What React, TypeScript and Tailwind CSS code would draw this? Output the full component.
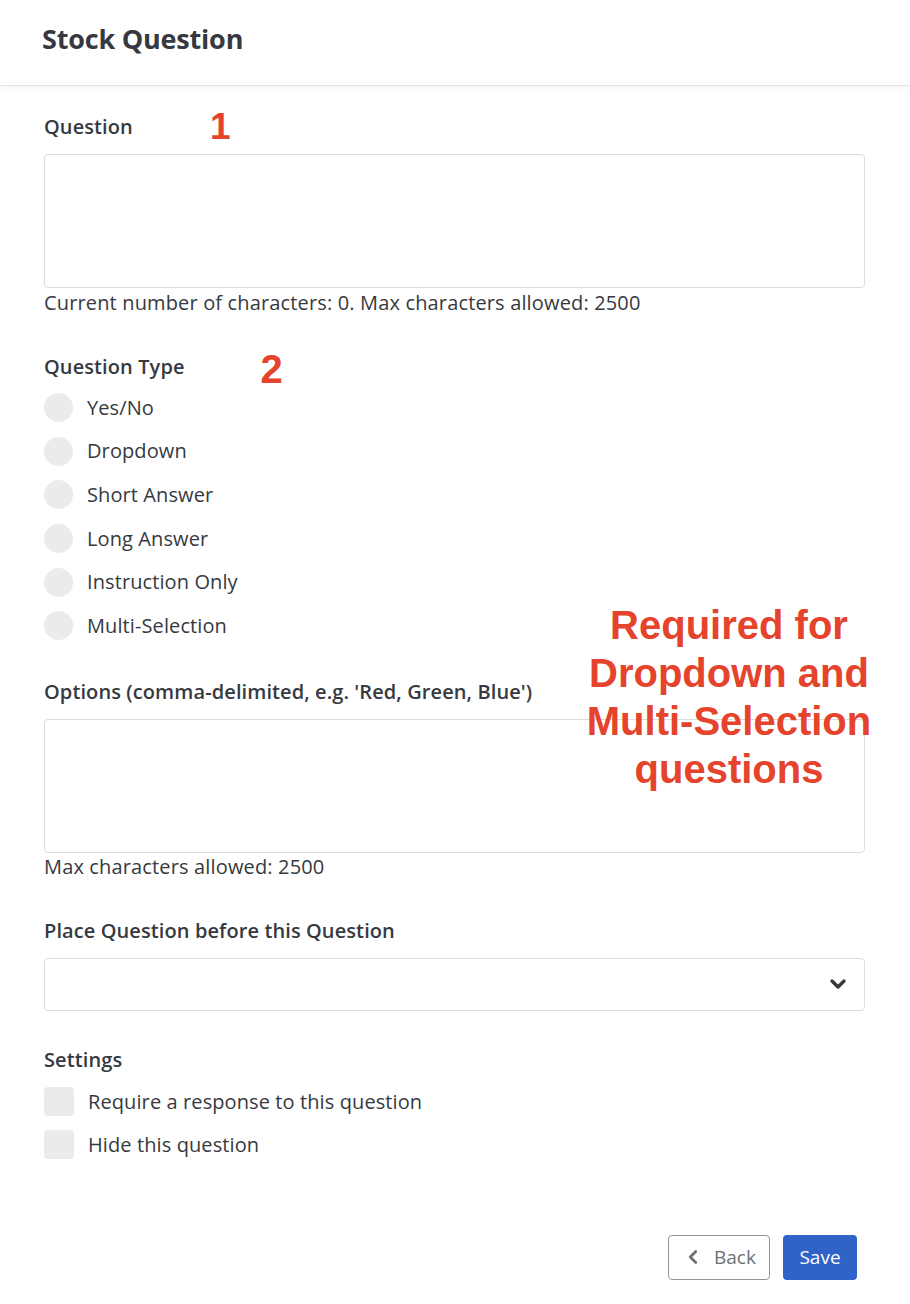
import React from "react";
import { ChevronDown, ChevronLeft } from "lucide-react";

const types = [
  "Yes/No",
  "Dropdown",
  "Short Answer",
  "Long Answer",
  "Instruction Only",
  "Multi-Selection",
];

const settings = ["Require a response to this question", "Hide this question"];

const App: React.FC = () => {
  return (
    <div className="relative min-h-[1304px] w-[910px] bg-white text-[#363a40] font-['Open_Sans',sans-serif]">
      <header className="h-[86px] border-b border-[#e4e4e7] shadow-[0_2px_4px_rgba(0,0,0,0.04)] pl-[42px] pt-[21px]">
        <h1 className="text-[27px] font-bold leading-[36px] tracking-[-0.2px]">Stock Question</h1>
      </header>

      <main className="px-[44px] pt-[26px]">
        {/* question */}
        <div className="flex items-end h-[30px]">
          <label className="text-[20px] font-semibold leading-[30px] tracking-[0.1px]">Question</label>
          <span className="ml-[77px] mb-[-3px] text-[37px] font-bold leading-[36px] text-[#e5432b] font-['Liberation_Sans',sans-serif]">1</span>
        </div>
        <textarea className="mt-[12px] block w-[821px] h-[134px] rounded-[4px] border border-[#dcdcdc] resize-none" />
        <p className="mt-[2px] text-[20px] leading-[26px] tracking-[0.15px]">
          Current number of characters: 0. Max characters allowed: 2500
        </p>

        {/* type */}
        <div className="mt-[36px] flex items-end h-[30px]">
          <label className="text-[20px] font-semibold leading-[30px] tracking-[0.1px]">Question Type</label>
          <span className="ml-[76px] mb-[-6px] text-[40px] font-bold leading-[38px] text-[#e5432b] font-['Liberation_Sans',sans-serif]">2</span>
        </div>
        <div className="mt-[4px] flex flex-col">
          {types.map((t) => (
            <div key={t} className="flex items-center h-[43.6px]">
              <span className="w-[29px] h-[29px] rounded-full bg-[#ebebed]" />
              <span className="ml-[14px] text-[20px] tracking-[0.1px]">{t}</span>
            </div>
          ))}
        </div>

        {/* options */}
        <label className="mt-[29px] block text-[20px] font-semibold leading-[30px] tracking-[0.1px]">
          Options (comma-delimited, e.g. 'Red, Green, Blue')
        </label>
        <textarea className="mt-[12px] block w-[821px] h-[134px] rounded-[4px] border border-[#dcdcdc] resize-none" />
        <p className="mt-[1px] text-[20px] leading-[26px] tracking-[0.15px]">Max characters allowed: 2500</p>

        {/* place before */}
        <label className="mt-[36px] block text-[20px] font-semibold leading-[30px] tracking-[0.1px]">
          Place Question before this Question
        </label>
        <div className="mt-[12px] flex items-center justify-end w-[821px] h-[53px] rounded-[4px] border border-[#dcdcdc] pr-[14px]">
          <ChevronDown size={24} strokeWidth={3.4} className="text-[#363a40]" />
        </div>

        {/* settings */}
        <label className="mt-[34px] block text-[20px] font-semibold leading-[30px] tracking-[0.1px]">Settings</label>
        <div className="mt-[12px] flex flex-col gap-[13px]">
          {settings.map((s) => (
            <div key={s} className="flex items-center">
              <span className="w-[30px] h-[29px] rounded-[4px] bg-[#ebebed]" />
              <span className="ml-[14px] text-[20px] tracking-[0.1px]">{s}</span>
            </div>
          ))}
        </div>

        <div className="mt-[75px] flex justify-end gap-[13px] pr-[9px]">
          <button className="flex items-center h-[45px] w-[102px] justify-center gap-[10px] rounded-[4px] border border-[#8f959c] text-[#6b7079] text-[19px]">
            <ChevronLeft size={22} strokeWidth={3} />
            Back
          </button>
          <button className="h-[45px] w-[74px] rounded-[4px] bg-[#2f63c8] text-white text-[19px]">Save</button>
        </div>
      </main>

      <div className="absolute left-[578px] top-[601px] w-[302px] text-center text-[40px] font-bold leading-[48px] text-[#e5432b] font-['Liberation_Sans',sans-serif]">
        Required for Dropdown and Multi-Selection questions
      </div>
    </div>
  );
};

export default App;
